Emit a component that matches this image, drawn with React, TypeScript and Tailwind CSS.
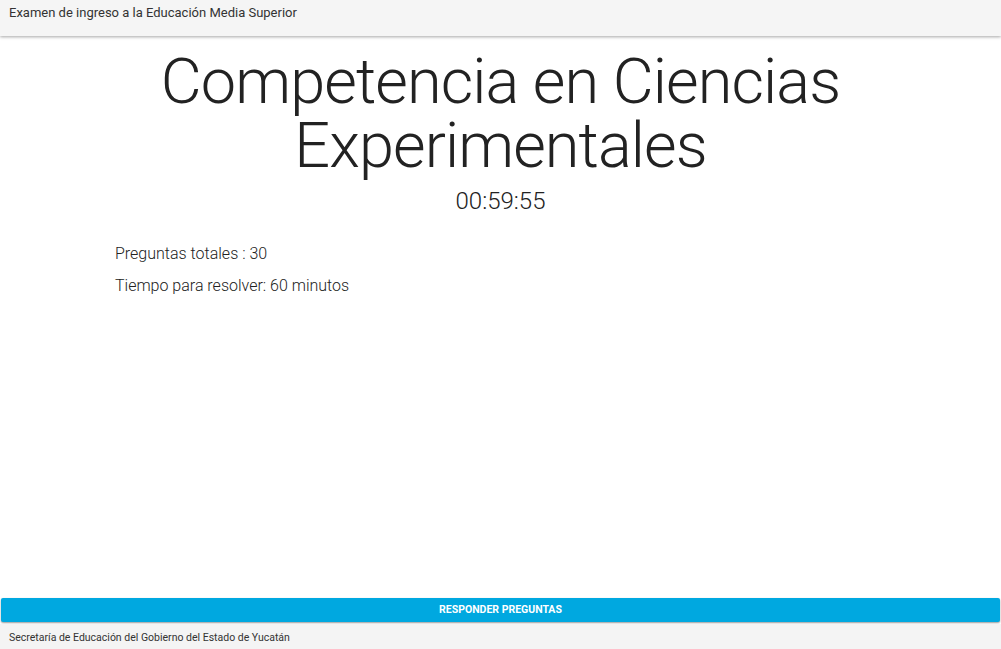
export default function App() {
  return (
    <div className="flex h-[649px] w-full flex-col bg-white font-['Roboto',sans-serif] text-[#222]">
      <header className="h-[36px] shrink-0 bg-[#f5f5f5] px-[9px] pt-[3px] text-[13px] text-[#333] shadow-[0_1px_3px_rgba(0,0,0,0.35)]">
        Examen de ingreso a la Educación Media Superior
      </header>

      <main className="flex flex-1 flex-col">
        <h1 className="mt-[14px] text-center text-[63px] leading-[64px] font-light tracking-[-0.9px] text-[#222]">
          Competencia en Ciencias
          <br />
          Experimentales
        </h1>
        <div className="mt-[8px] text-center text-[24px] leading-[30px] font-light text-[#222]">00:59:55</div>

        <div className="mt-[26px] flex flex-col gap-[8px] pl-[115px] text-[16px] font-light text-[#222]">
          <p>Preguntas totales : 30</p>
          <p>Tiempo para resolver: 60 minutos</p>
        </div>
      </main>

      <button className="mx-[1px] h-[24px] shrink-0 rounded-[2px] bg-[#00a8e0] text-[10.5px] font-bold text-white shadow-[0_1px_2px_rgba(0,0,0,0.4)]">
        RESPONDER PREGUNTAS
      </button>
      <footer className="mt-[2px] h-[25px] shrink-0 bg-[#f4f4f4] px-[9px] pt-[6px] text-[10.5px] text-[#333]">
        Secretaría de Educación del Gobierno del Estado de Yucatán
      </footer>
    </div>
  );
}
